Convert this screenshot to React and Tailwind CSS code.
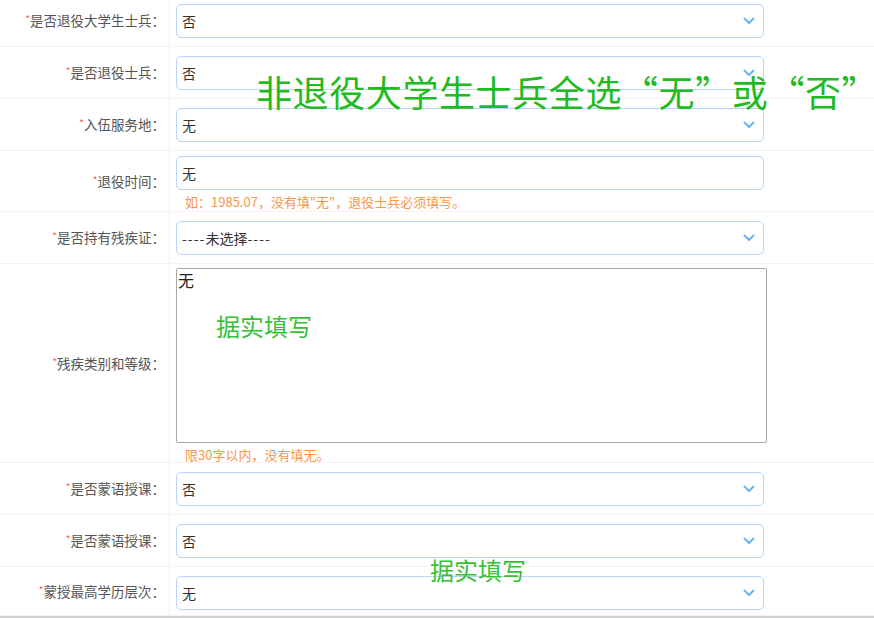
import React from "react";

const FONT = { fontFamily: '"Microsoft YaHei","Noto Sans CJK SC","Noto Sans",sans-serif' };

function Chevron() {
  return (
    <svg width="12" height="8" viewBox="0 0 12 8" className="absolute right-[8px] top-1/2 -translate-y-1/2">
      <path d="M1.5 1.5 L6 6 L10.5 1.5" fill="none" stroke="#6cb4f2" strokeWidth="2" strokeLinecap="round" strokeLinejoin="round" />
    </svg>
  );
}

function Label({ text }) {
  return (
    <div className="w-[170px] shrink-0 self-stretch flex items-center justify-end pr-[4px] border-r border-[#f8f0f0] text-[13.5px] text-[#555]">
      <span className="text-[#f25a5a] text-[10px] relative top-[-2px]">*</span>
      <span>{text}：</span>
    </div>
  );
}

function Select({ children }) {
  return (
    <div className="relative w-[588px] h-[34px] rounded-[5px] border border-[#bcd3f7] bg-white flex items-center pl-[5px] text-[14px] text-[#333]">
      {children}
      <Chevron />
    </div>
  );
}

function Input({ value }) {
  return (
    <div className="w-[588px] h-[34px] rounded-[5px] border border-[#bcd3f7] bg-white flex items-center pl-[5px] text-[14px] text-[#333]">
      {value}
    </div>
  );
}

function Row({ label, children, pt = "pt-[9px]", pb = "pb-[8px]" }) {
  return (
    <div className="flex border-b border-[#fcefef]">
      <Label text={label} />
      <div className={`pl-[6px] ${pt} ${pb}`}>{children}</div>
    </div>
  );
}

function Hint({ children, h }) {
  return <div className={`pl-[9px] pt-[3px] ${h} text-[13px] text-[#f7964a] leading-[18px]`}>{children}</div>;
}

export default function App() {
  return (
    <div className="relative w-[874px] h-[618px] overflow-hidden bg-white" style={FONT}>
      <div className="mt-[-5px] border-b-2 border-[#d0d0d0]">
        <Row label="是否退役大学生士兵"><Select>否</Select></Row>
        <Row label="是否退役士兵"><Select>否</Select></Row>
        <Row label="入伍服务地"><Select>无</Select></Row>
        <Row label="退役时间" pt="pt-[5px]" pb="pb-0">
          <Input value="无" />
          <Hint h="h-[21px]">如：1985.07，没有填"无"，退役士兵必须填写。</Hint>
        </Row>
        <Row label="是否持有残疾证">
          <Select>
            <span className="tracking-[1px]">----</span>未选择<span className="tracking-[1px]">----</span>
          </Select>
        </Row>
        <Row label="残疾类别和等级" pt="pt-[4px]" pb="pb-0">
          <div className="w-[591px] h-[175px] border border-[#a8a8a8] rounded-[2px] text-[16px] leading-[22px] text-[#222] pl-[1px]">无</div>
          <Hint h="h-[19px]">限30字以内，没有填无。</Hint>
        </Row>
        <Row label="是否蒙语授课"><Select>否</Select></Row>
        <Row label="是否蒙语授课"><Select>否</Select></Row>
        <Row label="蒙授最高学历层次" pb="pb-[5px]"><Select>无</Select></Row>
      </div>

      <div className="absolute left-[256px] top-[68px] w-max text-[36px] leading-[46px] tracking-[0.6px] text-[#1fbb1f] whitespace-nowrap">
        非退役大学生士兵全选“无”或“否”
      </div>
      <div className="absolute left-[216px] top-[311px] text-[24px] leading-[30px] text-[#35c235] whitespace-nowrap">据实填写</div>
      <div className="absolute left-[430px] top-[555px] text-[24px] leading-[30px] text-[#35c235] whitespace-nowrap">据实填写</div>
    </div>
  );
}
